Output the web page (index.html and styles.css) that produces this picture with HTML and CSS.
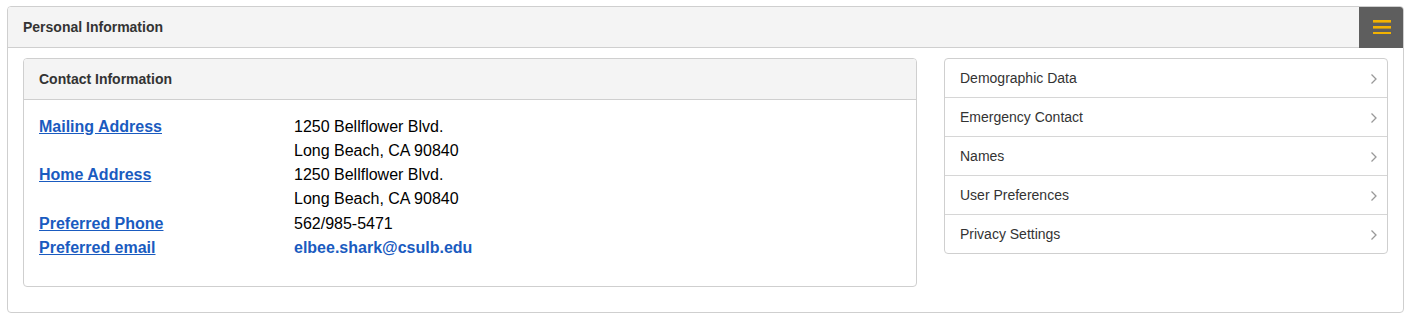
FILE: index.html
```html
<!DOCTYPE html>
<html lang="en">
<head>
<meta charset="utf-8">
<title>Personal Information</title>
<link rel="stylesheet" href="styles.css">
</head>
<body>
<div class="panel">
  <div class="panel-heading">
    <h2 class="panel-title">Personal Information</h2>
    <button class="menu-btn" aria-label="Menu">
      <svg width="18" height="15" viewBox="0 0 18 15"><rect x="0" y="1" width="18" height="2.6" fill="#f2b201"/><rect x="0" y="7" width="18" height="2.6" fill="#f2b201"/><rect x="0" y="13" width="18" height="2.6" fill="#f2b201"/></svg>
    </button>
  </div>
  <div class="panel-body">
    <div class="card">
      <div class="card-heading">Contact Information</div>
      <div class="card-body">
        <div class="info-row">
          <a class="info-label" href="#">Mailing Address</a>
          <div class="info-value">1250 Bellflower Blvd.<br>Long Beach, CA 90840</div>
        </div>
        <div class="info-row">
          <a class="info-label" href="#">Home Address</a>
          <div class="info-value">1250 Bellflower Blvd.<br>Long Beach, CA 90840</div>
        </div>
        <div class="info-row info-row-gap">
          <a class="info-label" href="#">Preferred Phone</a>
          <div class="info-value">562/985-5471</div>
        </div>
        <div class="info-row">
          <a class="info-label" href="#">Preferred email</a>
          <div class="info-value"><span class="email">elbee.shark@csulb.edu</span></div>
        </div>
      </div>
    </div>
    <ul class="nav-list">
      <li><a href="#"><span>Demographic Data</span><svg class="chev" width="8" height="12" viewBox="0 0 8 12"><path d="M1.5 1.5 L6 6 L1.5 10.5" fill="none" stroke="#999" stroke-width="1.3"/></svg></a></li>
      <li><a href="#"><span>Emergency Contact</span><svg class="chev" width="8" height="12" viewBox="0 0 8 12"><path d="M1.5 1.5 L6 6 L1.5 10.5" fill="none" stroke="#999" stroke-width="1.3"/></svg></a></li>
      <li><a href="#"><span>Names</span><svg class="chev" width="8" height="12" viewBox="0 0 8 12"><path d="M1.5 1.5 L6 6 L1.5 10.5" fill="none" stroke="#999" stroke-width="1.3"/></svg></a></li>
      <li><a href="#"><span>User Preferences</span><svg class="chev" width="8" height="12" viewBox="0 0 8 12"><path d="M1.5 1.5 L6 6 L1.5 10.5" fill="none" stroke="#999" stroke-width="1.3"/></svg></a></li>
      <li><a href="#"><span>Privacy Settings</span><svg class="chev" width="8" height="12" viewBox="0 0 8 12"><path d="M1.5 1.5 L6 6 L1.5 10.5" fill="none" stroke="#999" stroke-width="1.3"/></svg></a></li>
    </ul>
  </div>
</div>
</body>
</html>
```
FILE: styles.css
```css
* { box-sizing: border-box; }
html, body { margin: 0; padding: 0; background: #fff; }
body {
  padding: 6px 10px 0 7px;
  font-family: "Liberation Sans", Arial, sans-serif;
  color: #333;
}
.panel {
  border: 1px solid #cfcfcf;
  border-radius: 4px;
  height: 307px;
  overflow: hidden;
}
.panel-heading {
  display: flex;
  align-items: center;
  justify-content: space-between;
  height: 41px;
  background: #f4f4f4;
  border-bottom: 1px solid #cfcfcf;
  padding-left: 15px;
}
.panel-title {
  margin: 0;
  font-size: 14px;
  font-weight: bold;
  color: #333;
}
.menu-btn {
  width: 45px;
  height: 42px;
  margin-top: -1px;
  margin-right: -1px;
  border: 0;
  padding: 0;
  background: #5e5e5e;
  border-top-right-radius: 4px;
  display: flex;
  align-items: center;
  justify-content: center;
}
.menu-btn svg { display: block; margin-top: -1px; }
.panel-body {
  display: grid;
  grid-template-columns: 894px 444px;
  column-gap: 27px;
  align-items: start;
  padding: 10px 15px 0 15px;
}
.card {
  border: 1px solid #cfcfcf;
  border-radius: 4px;
  overflow: hidden;
}
.card-heading {
  height: 41px;
  background: #f4f4f4;
  border-bottom: 1px solid #cfcfcf;
  padding-left: 15px;
  display: flex;
  align-items: center;
  font-size: 14px;
  font-weight: bold;
  color: #333;
}
.card-body {
  padding: 15px 15px 26px 15px;
  font-size: 16px;
  line-height: 24px;
}
.info-row {
  display: grid;
  grid-template-columns: 255px 1fr;
}
.info-row-gap { margin-top: 1px; }
.info-label {
  color: #1a5bc0;
  font-weight: bold;
  text-decoration: underline;
  justify-self: start;
}
.info-value { color: #000; }
.email { color: #1a5bc0; font-weight: bold; }
.nav-list {
  list-style: none;
  margin: 0;
  padding: 0;
  border: 1px solid #cfcfcf;
  border-radius: 4px;
}
.nav-list li + li { border-top: 1px solid #d6d6d6; }
.nav-list a {
  display: flex;
  align-items: center;
  justify-content: space-between;
  height: 38px;
  padding: 0 9px 0 15px;
  font-size: 14px;
  color: #333;
  text-decoration: none;
}
.chev { display: block; margin-top: 2px; }
```
